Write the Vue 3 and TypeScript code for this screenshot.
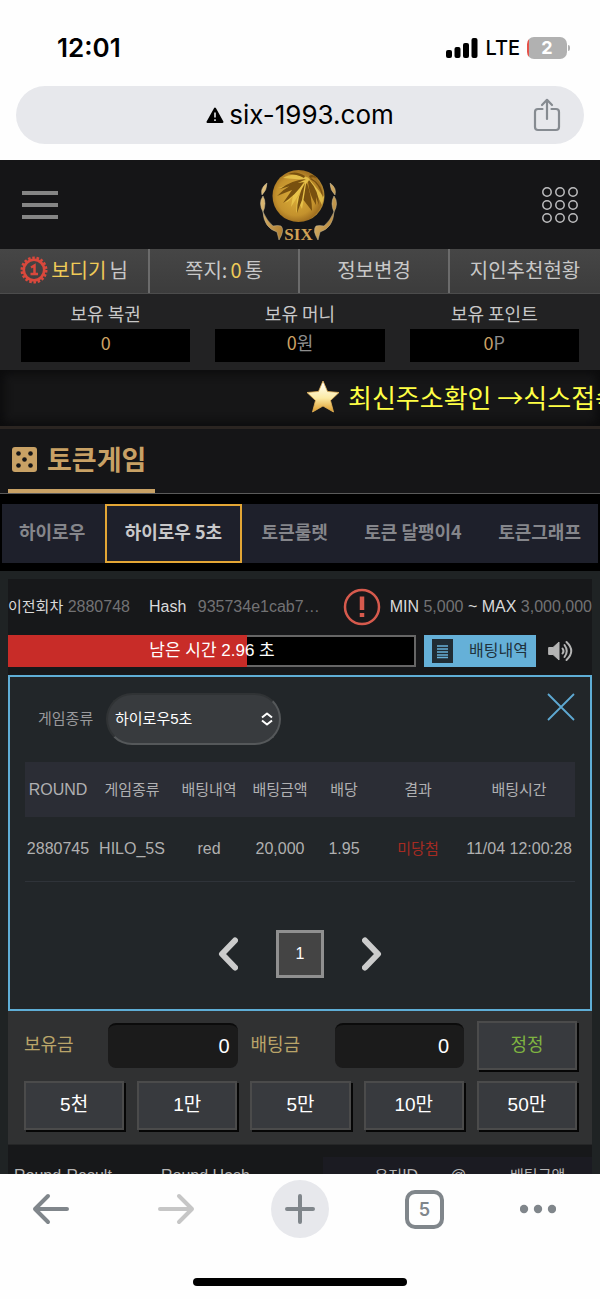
<script setup lang="ts">
import { ref } from 'vue'

interface Balance { label: string; amount: string; unit: string }
interface Column { key: string; label: string; width: number; latin?: boolean }

const balances: Balance[] = [
  { label: '보유 복권', amount: '0', unit: '' },
  { label: '보유 머니', amount: '0', unit: '원' },
  { label: '보유 포인트', amount: '0', unit: 'P' },
]

const tabs = ['하이로우', '하이로우 5초', '토큰룰렛', '토큰 달팽이4', '토큰그래프']
const activeTab = ref(1)

const columns: Column[] = [
  { key: 'round', label: 'ROUND', width: 66, latin: true },
  { key: 'game', label: '게임종류', width: 82 },
  { key: 'pick', label: '배팅내역', width: 72 },
  { key: 'amount', label: '배팅금액', width: 70 },
  { key: 'odds', label: '배당', width: 58 },
  { key: 'result', label: '결과', width: 90 },
  { key: 'time', label: '배팅시간', width: 112 },
]
const bets = [
  { round: '2880745', game: 'HILO_5S', pick: 'red', amount: '20,000', odds: '1.95', result: '미당첨', time: '11/04 12:00:28' },
] as Record<string, string>[]

const chips = ['5천', '1만', '5만', '10만', '50만']
const remaining = ref(2.96)
const game = ref('하이로우5초')
const held = ref('0')
const stake = ref('0')
const dots = [5, 18, 31]
</script>

<template>
  <div class="shell">
    <header class="chrome-top">
      <div class="status">
        <span class="clock">12:01</span>
        <div class="status-right">
          <svg width="32" height="20" viewBox="0 0 32 20" aria-hidden="true">
            <rect x="0" y="12" width="6" height="8" rx="2" />
            <rect x="8.500" y="9" width="6" height="11" rx="2" />
            <rect x="17" y="5" width="6" height="15" rx="2" />
            <rect x="25.500" y="0" width="6" height="20" rx="2" />
          </svg>
          <span class="network">LTE</span>
          <span class="battery">2</span>
        </div>
      </div>
      <div class="address">
        <div class="url">
          <svg width="18" height="17" viewBox="0 0 18 17" aria-hidden="true">
            <path d="M9 1.500 L16.500 15 H1.500 Z" fill="#000" stroke="#000" stroke-width="2" stroke-linejoin="round" />
            <path d="M9 5.500 V10.500 M9 12.200 V14" stroke="#e7e8ec" stroke-width="1.600" />
          </svg>
          <span>six-1993.com</span>
        </div>
        <button class="share" type="button" aria-label="공유">
          <svg width="28" height="34" viewBox="0 0 28 34" fill="none" stroke="#868b91" stroke-width="2.200" stroke-linecap="round" stroke-linejoin="round">
            <path d="M9.500 11 H5 Q2 11 2 14 V29 Q2 32 5 32 H23 Q26 32 26 29 V14 Q26 11 23 11 H18.500" />
            <path d="M14 21 V2 M9 7 L14 1.800 L19 7" />
          </svg>
        </button>
      </div>
    </header>

    <main class="site">
      <div class="brand">
        <button class="menu" type="button" aria-label="메뉴"><i></i><i></i><i></i></button>
        <a class="logo" href="#" aria-label="SIX">
          <svg width="80" height="74" viewBox="1 -1 80 74">
            <defs>
              <radialGradient id="ball" cx="0.450" cy="0.500" r="0.620">
                <stop offset="0" stop-color="#dcae3a" /><stop offset="0.600" stop-color="#c4922d" />
                <stop offset="0.820" stop-color="#a06f20" /><stop offset="1" stop-color="#e8cf60" />
              </radialGradient>
              <linearGradient id="gold" x1="0" y1="0" x2="1" y2="1">
                <stop offset="0" stop-color="#e6c684" /><stop offset="1" stop-color="#ad7a2b" />
              </linearGradient>
            </defs>
            <circle cx="39.500" cy="27" r="26" fill="url(#ball)" />
            <path d="M49 8.500 Q34 3 24 9 L47 11 L19 19 Q28 18 35 18 Q24 21 18 27 L46 13 L26 34 Q32 31 34 26 L32 38 L47 14 L38 30 L37 44 L41 36 L43 40 L48 13 L51 12 L63 36 L65 28 Z" fill="#ecc94f" opacity="0.800" />
            <path d="M47 10 Q33 11 21 20 Q31 18 40 13.500 Z M45 13 Q30 14 18 27 L33 21 L24 34 Q37 26 45 13 Z M46 14 Q38 27 38 44 L43 31 Z M47 15 L44.500 31 L53 42 Q53 28 48 14 Z M49 13 Q50 25 57 36 L57 28 L60 36 Q60 22 50 11 Z M51 10 Q60 14 64 29 Q64 16 52 9 Z M46 7 Q37 1 29 5 Q38 5 45 9 Z M50 7 Q54 4 59 10 Q55 7 51 9 Z" fill="#78500f" />
            <g fill="url(#gold)" stroke="#c4b898" stroke-width="0.500">
              <path d="M8 14 Q1 19 3 26 Q8 21 8 14 Z M4 27 Q-1 34 4 43 Q8 34 4 27 Z M4 43 Q5 59 18 63 L20 71 Q26 61 22 57 Q19 56 14 57 Q8 52 4 43 Z" />
              <path d="M71 14 Q78 19 76 26 Q71 21 71 14 Z M75 27 Q80 34 75 43 Q71 34 75 27 Z M75 43 Q74 59 61 63 L59 71 Q53 61 57 57 Q60 56 65 57 Q71 52 75 43 Z" />
            </g>
            <text x="39.500" y="71" class="logo-text" text-anchor="middle">SIX</text>
          </svg>
        </a>
        <button class="apps" type="button" aria-label="전체 메뉴">
          <svg width="36" height="36" viewBox="0 0 36 36" fill="none" stroke="#bdbdbf" stroke-width="1.500">
            <template v-for="y in dots" :key="y">
              <circle v-for="x in dots" :key="x" :cx="x" :cy="y" r="4.200" />
            </template>
          </svg>
        </button>
      </div>

      <nav class="account">
        <a href="#">
          <svg width="28" height="28" viewBox="0 0 28 28" fill="none" stroke="#d9483c" aria-hidden="true">
            <circle cx="14" cy="14" r="12" stroke-width="3" stroke-dasharray="2.500 1.689" />
            <circle cx="14" cy="14" r="10.200" stroke-width="2.600" />
            <path d="M11 11.500 L14.500 9.500 V18 M10.500 18 H18" stroke-width="2.500" />
          </svg>
          <b>보디기</b><span>님</span>
        </a>
        <a href="#"><span>쪽지:</span><b>0</b><span>통</span></a>
        <a href="#">정보변경</a>
        <a href="#">지인추천현황</a>
      </nav>

      <section class="balances">
        <div v-for="b in balances" :key="b.label" class="balance">
          <span>{{ b.label }}</span>
          <p><em>{{ b.amount }}</em>{{ b.unit }}</p>
        </div>
      </section>

      <div class="notice">
        <svg width="34" height="33" viewBox="0 0 34 33" aria-hidden="true">
          <defs>
            <linearGradient id="star" x1="0" y1="0" x2="0" y2="1">
              <stop offset="0.100" stop-color="#fffdf0" /><stop offset="0.550" stop-color="#fbeaa5" /><stop offset="1" stop-color="#dc9a28" />
            </linearGradient>
          </defs>
          <path d="M17 1 L21.500 11.500 L33 12.500 L24.500 20.500 L27.500 32 L17 26 L6.500 32 L9.500 20.500 L1 12.500 L12.500 11.500 Z" fill="url(#star)" stroke="#e6b459" stroke-width="0.800" stroke-linejoin="round" />
        </svg>
        <span>최신주소확인 →식스접속</span>
      </div>

      <div class="title">
        <h1>
          <svg width="25" height="25" viewBox="0 0 25 25" aria-hidden="true">
            <rect width="25" height="25" rx="3" fill="#c8a165" />
            <g fill="#151517"><circle cx="6.500" cy="6.500" r="2.300" /><circle cx="18.500" cy="6.500" r="2.300" /><circle cx="12.500" cy="12.500" r="2.300" /><circle cx="6.500" cy="18.500" r="2.300" /><circle cx="18.500" cy="18.500" r="2.300" /></g>
          </svg>
          토큰게임
        </h1>
      </div>

      <div class="tabs">
        <button v-for="(t, i) in tabs" :key="t" type="button" :class="{ active: i === activeTab }" @click="activeTab = i">{{ t }}</button>
      </div>

      <div class="stage">
        <div class="board">
          <div class="info">
            <span class="prev"><span class="ko">이전회차</span> <i>2880748</i></span>
            <span class="hash">Hash <i>935734e1cab7…</i></span>
            <span class="limits">
              <svg width="38" height="38" viewBox="0 0 38 38" fill="none" stroke="#d65a4d" aria-hidden="true">
                <circle cx="19" cy="19" r="17" stroke-width="2.500" />
                <path d="M19 8.500 V22 M19 25 V29" stroke-width="4.500" />
              </svg>
              <span>MIN <i>5,000</i> ~ MAX <i>3,000,000</i></span>
            </span>
          </div>

          <div class="timer-row">
            <div class="timer">
              <div class="fill" :style="{ width: remaining / 5 * 100 + '%' }"></div>
              <span>남은 시간 {{ remaining }} 초</span>
            </div>
            <button class="history-btn" type="button">
              <svg width="21" height="24" viewBox="0 0 21 24" aria-hidden="true">
                <rect width="21" height="24" fill="#202c34" />
                <path d="M5 7 H16 M5 10 H16 M5 13 H16 M5 16 H16 M5 18.500 H16" stroke="#67b0d8" stroke-width="1.400" />
              </svg>
              배팅내역
            </button>
            <button class="sound" type="button" aria-label="소리">
              <svg width="26" height="22" viewBox="0 0 26 22" fill="none" stroke="#b4b4b4" stroke-width="2" stroke-linecap="round">
                <path d="M1 7.500 H5 L11 2 V20 L5 14.500 H1 Z" fill="#b4b4b4" stroke="#b4b4b4" stroke-width="1" stroke-linejoin="round" />
                <path d="M14.500 8.500 Q16.500 11 14.500 13.500 M16.500 5 Q21 11 16.500 17 M18.500 2 Q28 11 18.500 20" />
              </svg>
            </button>
          </div>

          <section class="history">
            <div class="filter">
              <label for="game">게임종류</label>
              <div class="picker">
                <select id="game" v-model="game"><option>하이로우5초</option></select>
                <svg width="12" height="14" viewBox="0 0 12 14" fill="none" stroke="#fff" stroke-width="2" stroke-linejoin="round"><path d="M1 5.500 L6 1.500 L11 5.500 M1 8.500 L6 12.500 L11 8.500" /></svg>
              </div>
              <button class="close" type="button" aria-label="닫기">
                <svg width="28" height="28" viewBox="0 0 28 28" stroke="#5ea9d2" stroke-width="1.800"><path d="M1 1 L27 27 M27 1 L1 27" /></svg>
              </button>
            </div>
            <table>
              <colgroup><col v-for="c in columns" :key="c.key" :width="c.width" /></colgroup>
              <thead>
                <tr><th v-for="c in columns" :key="c.key" scope="col" :class="{ latin: c.latin }">{{ c.label }}</th></tr>
              </thead>
              <tbody>
                <tr v-for="b in bets" :key="b.round">
                  <td v-for="c in columns" :key="c.key" :class="{ lost: c.key === 'result' }">{{ b[c.key] }}</td>
                </tr>
              </tbody>
            </table>
            <div class="pager">
              <button type="button" aria-label="이전">
                <svg width="20" height="34" viewBox="0 0 20 34"><path d="M17 3.500 L4 17 L17 30.500" /></svg>
              </button>
              <button class="page" type="button">1</button>
              <button type="button" aria-label="다음">
                <svg width="20" height="34" viewBox="0 0 20 34"><path d="M3 3.500 L16 17 L3 30.500" /></svg>
              </button>
            </div>
          </section>

          <section class="betting">
            <div class="amounts">
              <div class="field"><label for="held">보유금</label><input id="held" v-model="held" type="text" /></div>
              <div class="field stake"><label for="stake">배팅금</label><input id="stake" v-model="stake" type="text" /></div>
              <button class="key reset" type="button">정정</button>
            </div>
            <div class="chips">
              <button v-for="c in chips" :key="c" class="key" type="button">{{ c }}</button>
            </div>
          </section>

          <div class="results">
            <table class="rounds"><thead><tr><th scope="col">Round-Result</th><th scope="col">Round Hash</th></tr></thead></table>
            <table class="users"><thead><tr><th scope="col"><span class="ko">유저</span>ID</th><th scope="col">@</th><th scope="col" class="ko">배팅금액</th></tr></thead></table>
          </div>
        </div>
      </div>
    </main>

    <footer class="chrome-bottom">
      <div class="tools">
        <button type="button" aria-label="뒤로">
          <svg width="38" height="32" viewBox="0 0 38 32"><path d="M35 16 H3 M16 3 L3 16 L16 29" /></svg>
        </button>
        <button class="off" type="button" aria-label="앞으로">
          <svg width="38" height="32" viewBox="0 0 38 32"><path d="M3 16 H35 M22 3 L35 16 L22 29" /></svg>
        </button>
        <button class="plus" type="button" aria-label="새 탭">
          <svg width="32" height="32" viewBox="0 0 32 32"><path d="M16 3 V29 M3 16 H29" /></svg>
        </button>
        <button type="button" aria-label="열린 탭"><span class="count">5</span></button>
        <button class="more" type="button" aria-label="더보기">
          <svg width="36" height="10" viewBox="1 0 36 10"><circle cx="5" cy="5" r="4.200" /><circle cx="19" cy="5" r="4.200" /><circle cx="33" cy="5" r="4.200" /></svg>
        </button>
      </div>
      <div class="home"></div>
    </footer>
  </div>
</template>

<style>
body { background: #fefefe; }
</style>

<style scoped>
* { box-sizing: border-box; }
button { margin: 0; padding: 0; border: 0; background: none; color: inherit; font: inherit; cursor: pointer; }
a { color: inherit; text-decoration: none; }
i, em { font-style: normal; }
svg { display: block; flex: none; }

.shell { display: flex; flex-direction: column; height: 100vh; color: #c8c8c8; font-family: "Noto Sans CJK KR", sans-serif; }

.chrome-top { flex: none; padding-bottom: 16px; background: #fefefe; color: #000; font-family: Inter, sans-serif; }
.status { display: flex; align-items: center; justify-content: space-between; height: 86px; padding: 9px 33px 0 57px; }
.clock { font-size: 26px; font-weight: 600; }
.status-right { display: flex; align-items: center; gap: 7px; }
.network { font-size: 20px; font-weight: 500; }
.battery { position: relative; width: 40px; height: 22px; border-radius: 7px; background: linear-gradient(90deg, #e5534b 2px, #b1b1b1 2px); color: #fff; font-size: 18px; font-weight: 700; line-height: 22px; text-align: center; }
.battery::after { content: ""; position: absolute; right: -3px; top: 8px; width: 2px; height: 6px; border-radius: 0 2px 2px 0; background: #b1b1b1; }
.address { display: flex; align-items: center; height: 58px; margin: 0 16px; padding: 0 23px; border-radius: 29px; background: #e7e8ec; }
.url { display: flex; flex: 1; align-items: center; justify-content: center; gap: 5px; padding-left: 28px; font-size: 26px; line-height: 32px; }

.site { flex: 1; min-height: 0; overflow: hidden; background: #000; }
.brand { display: flex; align-items: center; justify-content: space-between; height: 89px; padding: 0 22px; background: #151517; }
.menu { display: grid; gap: 8px; width: 36px; }
.menu i { height: 4px; background: #858585; }
.logo-text { fill: #d0a256; font-family: "Liberation Serif", serif; font-size: 17px; font-weight: 700; }
.account { display: grid; grid-template-columns: repeat(4, 1fr); height: 45px; border-bottom: 1px solid #4c4c4c; background: linear-gradient(#464646, #3c3c3c); font-size: 20px; line-height: 30px; white-space: nowrap; }
.account a { display: flex; align-items: center; justify-content: center; gap: 3px; padding-bottom: 2px; }
.account a:not(:last-child) { border-right: 2px solid #6b6b6b; }
.account b { color: #efcb58; font-weight: 400; }
.balances { display: grid; grid-template-columns: repeat(3, 1fr); gap: 25px; padding: 5px 21px 8px; background: #222223; font-size: 18px; text-align: center; }
.balance span { display: block; line-height: 28px; }
.balance p { height: 33px; margin: 2px 0 0; background: #000; color: #8d8d8d; line-height: 26px; }
.balance em { color: #cda263; }
.notice { display: flex; align-items: center; gap: 8px; height: 56px; padding: 0 0 3px 51%; overflow: hidden; background: #161617; box-shadow: inset 0 0 8px 4px #0c0c0d; color: #ffff45; font-size: 26px; line-height: 40px; white-space: nowrap; }
.title { height: 68px; padding: 0 8px; border-top: 3px solid #2b2521; border-bottom: 1px solid #5a5a5a; background: #151517; }
h1 { display: inline-flex; align-items: center; gap: 10px; height: 64px; margin: 0; padding: 0 9px 0 4px; border-bottom: 4px solid #c8a165; color: #c8a165; font-size: 27px; font-weight: 700; line-height: 40px; }
.tabs { display: flex; justify-content: space-between; margin: 10px 2px 8px; background: #1e202b; }
.tabs button { height: 59px; padding: 0 17px 6px; color: #85868b; font-size: 18px; font-weight: 700; line-height: 28px; white-space: nowrap; }
.tabs .active { padding: 0 18px 6px; border: 2px solid #e3a635; color: #c8c8ca; }

.stage { padding: 8px 8px 0; background: #1f2324; font-family: "Liberation Sans", "Noto Sans CJK KR", sans-serif; font-size: 16px; line-height: 24px; }
.board { background: #17181a; }
.ko { font-size: 15px; }
.info { display: flex; align-items: center; gap: 19px; height: 56px; color: #dadada; white-space: nowrap; }
.info i { color: #727274; }
.hash i { margin-left: 7px; }
.limits { display: flex; align-items: center; gap: 9px; margin-left: auto; }
.timer-row { display: flex; gap: 8px; height: 32px; }
.timer { position: relative; flex: 1; border: 2px solid #666; background: #000; color: #fff; font-size: 17px; text-align: center; line-height: 28px; }
.timer .fill { position: absolute; top: -2px; bottom: -2px; left: -2px; background: #c82c28; }
.timer span { position: relative; }
.history-btn { display: flex; align-items: center; justify-content: space-between; width: 112px; padding: 0 8px; background: #65b0d8; color: #20313c; }
.sound { width: 48px; padding-left: 4px; }
.history { margin-top: 8px; padding: 16px 15px 31px; border: 2px solid #5faed6; background: #222629; }
.filter { display: flex; align-items: center; height: 52px; padding-left: 13px; }
.filter label { width: 68px; color: #99999b; font-size: 15px; }
.picker { display: flex; align-items: center; }
select { width: 175px; height: 52px; padding: 0 7px; appearance: none; border: 2px solid #303335; border-right-color: #55585a; border-bottom-color: #55585a; border-radius: 26px; background: #383b3e; color: #fff; font: inherit; font-size: 15px; }
.picker svg { margin-left: -20px; pointer-events: none; }
.close { align-self: flex-start; margin-left: auto; }
table { width: 100%; border-collapse: collapse; table-layout: fixed; }
th, td { padding: 0; font-weight: 400; text-align: center; white-space: nowrap; }
.history table { margin-top: 17px; }
.history th { height: 55px; background: #2b2d35; color: #b0b0b2; font-size: 15px; }
.history th.latin { font-size: 16px; }
.history td { height: 64px; border-bottom: 1px solid #2f3339; color: #b0b0b0; }
.history td.lost { color: #a52b22; font-size: 15px; }
.pager { display: flex; align-items: center; justify-content: center; gap: 38px; margin-top: 48px; }
.pager path { fill: none; stroke: #ccc; stroke-width: 6; stroke-linecap: round; stroke-linejoin: round; }
.page { width: 48px; height: 48px; border: 3px solid #909090; background: #444; color: #fff; }
.betting { padding: 10px 15px 14px 16px; border-bottom: 1px solid #252627; background: #303132; font-size: 20px; }
.amounts { display: grid; grid-template-columns: minmax(0, 1fr) minmax(0, 1fr) 100px; gap: 13px; }
.field { display: flex; align-items: center; }
.field label { flex: none; width: 84px; color: #b9a469; font-size: 18px; }
.field input { flex: 1; min-width: 0; height: 45px; padding: 0 8px; border: 0; border-top: 2px solid #0b0b0b; border-radius: 8px; background: #1b1b1b; color: #fff; font: inherit; text-align: right; }
.stake input { padding-right: 15px; }
.key { height: 49px; border: 2px solid #4b4b4b; background: #383a3e; box-shadow: 2px 2px 0 #060606; color: #fff; font-size: 19px; }
.reset { color: #7fb341; font-size: 18px; }
.chips { display: grid; grid-template-columns: repeat(5, 1fr); gap: 13px; margin-top: 11px; }
.results { display: flex; padding-top: 12px; color: #b5b5b5; }
.results th { height: 38px; }
.rounds { width: 54%; }
.rounds th { padding-left: 6px; text-align: left; }
.rounds th:first-child { width: 147px; }
.users { width: 46%; background: #1b1b22; }
.users th:first-child { width: 110px; padding-left: 36px; }
.users th:nth-child(2) { width: 50px; }

.chrome-bottom { flex: none; background: #fefefe; color: #80868b; font-family: Inter, sans-serif; }
.tools { display: flex; align-items: center; justify-content: space-between; padding: 6px 22px 0; }
.tools button { display: grid; place-items: center; width: 58px; height: 58px; border-radius: 50%; }
.tools svg { fill: none; stroke: #80868b; stroke-width: 4; stroke-linecap: round; stroke-linejoin: round; }
.tools .off svg { stroke: #c6c6c6; }
.tools .plus { background: #e7e8ec; }
.tools .more { justify-items: start; }
.tools .more svg { fill: #80868b; stroke: none; }
.count { width: 39px; height: 39px; border: 4px solid #80868b; border-radius: 10px; font-size: 18px; font-weight: 600; line-height: 31px; text-align: center; }
.home { width: 214px; height: 8px; margin: 40px auto 13px; border-radius: 4px; background: #000; }
</style>
